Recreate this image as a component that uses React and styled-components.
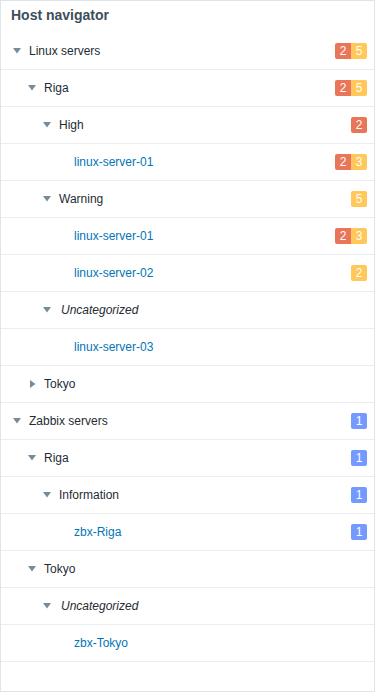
import React from "react";
import styled, { createGlobalStyle } from "styled-components";

const Global = createGlobalStyle`
  html, body { margin: 0; padding: 0; background: #fff; }
  body { font-family: "Liberation Sans", Arial, sans-serif; }
  * { box-sizing: border-box; }
`;

const Widget = styled.div`
  width: 375px;
  height: 692px;
  border: 1px solid #dfe4e7;
  background: #fff;
  display: flex;
  flex-direction: column;
`;

const Header = styled.div`
  height: 32px;
  flex: none;
  display: flex;
  align-items: center;
  padding: 0 0 4px 10px;
  font-size: 14px;
  font-weight: bold;
  color: #3d4e5a;
`;

const List = styled.div`
  display: flex;
  flex-direction: column;
`;

const Row = styled.div`
  height: 37px;
  flex: none;
  border-bottom: 1px solid #ebeef0;
  display: flex;
  align-items: center;
  padding: 0 7px 0 ${(p) => 9 + p.$level * 15}px;
  font-size: 12px;
`;

const Toggle = styled.span`
  width: 19px;
  flex: none;
  display: flex;
  align-items: center;
  padding-left: ${(p) => (p.$open ? 3 : 5)}px;
`;

const Label = styled.span`
  flex: 1;
  color: ${(p) => (p.$link ? "#0275b8" : "#1f2c33")};
  font-style: ${(p) => (p.$italic ? "italic" : "normal")};
  ${(p) => (p.$italic ? "padding-left: 2px;" : "")}
`;

const Badges = styled.span`
  display: flex;
`;

const Badge = styled.span`
  width: 16px;
  height: 16px;
  display: flex;
  align-items: center;
  justify-content: center;
  color: #fff;
  font-size: 12px;
  background: ${(p) => p.$color};
  &:first-child { border-radius: 2px 0 0 2px; }
  &:last-child { border-radius: 0 2px 2px 0; }
  &:only-child { border-radius: 2px; }
`;

const COLORS = { h: "#e97659", w: "#ffc859", i: "#7499ff" };

const Arrow = ({ open }) =>
  open ? (
    <svg width="8" height="6" viewBox="0 0 8 6">
      <polygon points="0,0 8,0 4,5.5" fill="#768d99" />
    </svg>
  ) : (
    <svg width="6" height="8" viewBox="0 0 6 8">
      <polygon points="0,0 5.5,4 0,8" fill="#768d99" />
    </svg>
  );

const rows = [
  { l: 0, t: "Linux servers", open: true, b: [["h", 2], ["w", 5]] },
  { l: 1, t: "Riga", open: true, b: [["h", 2], ["w", 5]] },
  { l: 2, t: "High", open: true, b: [["h", 2]] },
  { l: 3, t: "linux-server-01", host: true, b: [["h", 2], ["w", 3]] },
  { l: 2, t: "Warning", open: true, b: [["w", 5]] },
  { l: 3, t: "linux-server-01", host: true, b: [["h", 2], ["w", 3]] },
  { l: 3, t: "linux-server-02", host: true, b: [["w", 2]] },
  { l: 2, t: "Uncategorized", open: true, italic: true, b: [] },
  { l: 3, t: "linux-server-03", host: true, b: [] },
  { l: 1, t: "Tokyo", open: false, b: [] },
  { l: 0, t: "Zabbix servers", open: true, b: [["i", 1]] },
  { l: 1, t: "Riga", open: true, b: [["i", 1]] },
  { l: 2, t: "Information", open: true, b: [["i", 1]] },
  { l: 3, t: "zbx-Riga", host: true, b: [["i", 1]] },
  { l: 1, t: "Tokyo", open: true, b: [] },
  { l: 2, t: "Uncategorized", open: true, italic: true, b: [] },
  { l: 3, t: "zbx-Tokyo", host: true, b: [] },
];

export default function App() {
  return (
    <>
      <Global />
      <Widget>
        <Header>Host navigator</Header>
        <List>
          {rows.map((r, i) => (
            <Row key={i} $level={r.l}>
              <Toggle $open={r.open}>{!r.host && <Arrow open={r.open} />}</Toggle>
              <Label $link={r.host} $italic={r.italic}>{r.t}</Label>
              {r.b.length > 0 && (
                <Badges>
                  {r.b.map(([c, n], j) => (
                    <Badge key={j} $color={COLORS[c]}>{n}</Badge>
                  ))}
                </Badges>
              )}
            </Row>
          ))}
        </List>
      </Widget>
    </>
  );
}
